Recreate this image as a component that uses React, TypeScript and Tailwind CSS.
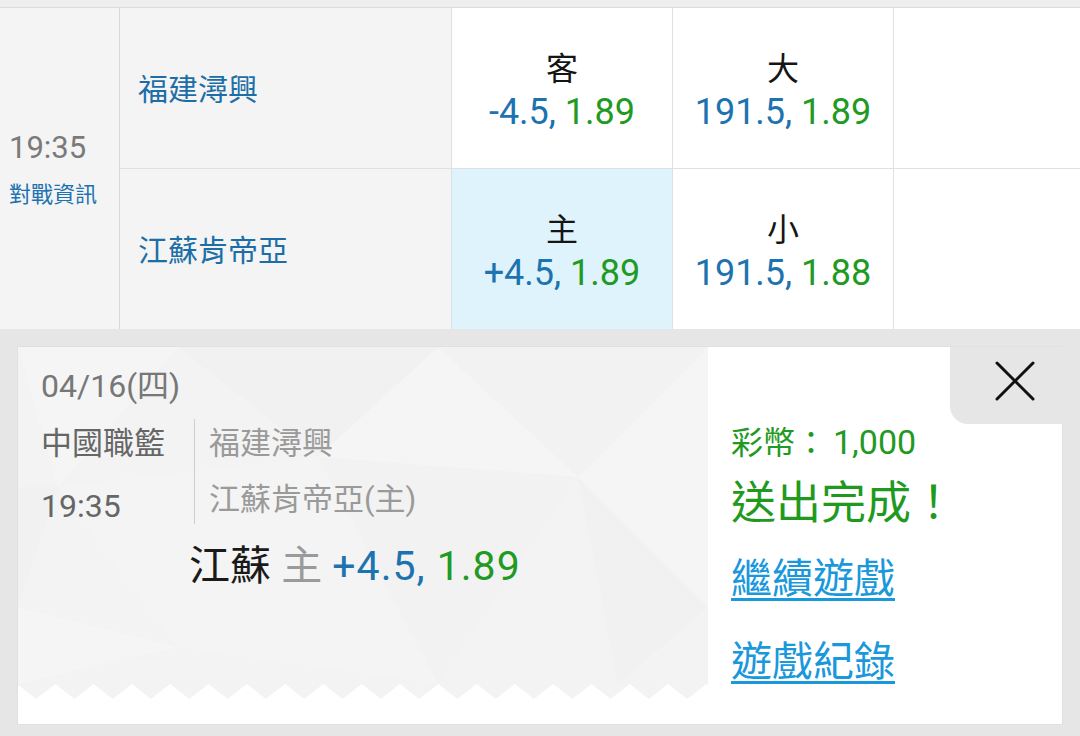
import React from "react";

const BLUE = "text-[#1d72b0]";
const GREEN = "text-[#1f9a22]";

function OddsCell({ label, a, b, highlight }: { label: string; a: string; b: string; highlight?: boolean }) {
  return (
    <div
      className={
        "flex flex-col items-center justify-center pt-[6px] border-r border-[#dde1e4] " +
        (highlight ? "bg-[#dff3fc]" : "bg-white")
      }
    >
      <div className="text-[32px] leading-[42px] text-[#151515]">{label}</div>
      <div className="text-[36px] leading-[44px] whitespace-nowrap">
        <span className={BLUE}>{a}, </span>
        <span className={GREEN}>{b}</span>
      </div>
    </div>
  );
}

function Zigzag() {
  const pts: string[] = ["0,15"];
  const period = 38.3;
  for (let k = 0; k < 20; k++) {
    const peak = -1 + period * k;
    const valley = peak + period / 2;
    pts.push(`${peak.toFixed(1)},0`);
    pts.push(`${valley.toFixed(1)},15`);
  }
  pts.push("690,15");
  return (
    <svg width="690" height="15" viewBox="0 0 690 15" className="block">
      <polygon points={pts.join(" ")} fill="#ffffff" />
    </svg>
  );
}

function Pattern() {
  return (
    <svg
      className="absolute inset-0 h-full w-full"
      viewBox="0 0 690 337"
      preserveAspectRatio="none"
    >
      <polygon points="0,0 160,0 40,140" fill="#ffffff" opacity="0.18" />
      <polygon points="160,0 420,0 300,110" fill="#e9e9e9" opacity="0.2" />
      <polygon points="300,110 420,0 560,130" fill="#ffffff" opacity="0.2" />
      <polygon points="420,0 690,0 560,130" fill="#ececec" opacity="0.18" />
      <polygon points="560,130 690,0 690,260" fill="#ffffff" opacity="0.18" />
      <polygon points="0,140 40,140 0,260" fill="#ebebeb" opacity="0.2" />
      <polygon points="40,140 300,110 160,300" fill="#ffffff" opacity="0.15" />
      <polygon points="300,110 560,130 420,337" fill="#ececec" opacity="0.18" />
      <polygon points="160,300 300,110 420,337" fill="#ffffff" opacity="0.15" />
      <polygon points="560,130 690,260 600,337" fill="#eaeaea" opacity="0.18" />
      <polygon points="0,260 160,300 0,337" fill="#ffffff" opacity="0.18" />
    </svg>
  );
}

export default function App() {
  return (
    <div className="w-[1080px] h-[736px] overflow-hidden bg-[#e6e6e6] font-['Roboto','Noto_Sans_CJK_TC',sans-serif]">
      <div className="h-[8px] bg-[#eeeeee] border-b border-[#d6dee4]" />
      <div className="grid grid-cols-[120px_332px_221px_221px_186px] grid-rows-[161px_160px]">
        <div className="row-span-2 flex flex-col justify-center bg-[#f4f4f4] border-r border-[#d9d9d9] pl-[9px]">
          <div className="text-[31px] leading-[40px] text-[#7a7a7a]">19:35</div>
          <div className="mt-[12px] text-[22px] leading-[30px] text-[#1d72b0]">對戰資訊</div>
        </div>
        <div className="flex items-center bg-[#f4f4f4] border-r border-b border-[#dde1e4] pl-[18px] pt-[3px] text-[30px] text-[#1d6ea6]">
          福建潯興
        </div>
        <div className="border-b border-[#dde1e4] grid">
          <OddsCell label="客" a="-4.5" b="1.89" />
        </div>
        <div className="border-b border-[#dde1e4] grid">
          <OddsCell label="大" a="191.5" b="1.89" />
        </div>
        <div className="bg-white border-b border-[#dde1e4]" />
        <div className="flex items-center bg-[#f4f4f4] border-r border-[#dde1e4] pl-[18px] pt-[3px] text-[30px] text-[#1d6ea6]">
          江蘇肯帝亞
        </div>
        <OddsCell label="主" a="+4.5" b="1.89" highlight />
        <OddsCell label="小" a="191.5" b="1.88" />
        <div className="bg-white" />
      </div>

      <div className="relative px-[18px] pt-[18px]">
        <div className="flex h-[377px] shadow-[0_0_1px_rgba(0,0,0,0.15)]">
          <div className="flex w-[690px] flex-col bg-white">
            <div className="relative flex-1 bg-[#f3f3f3]">
              <Pattern />
              <div className="relative pl-[23px] pt-[21px]">
                <div className="text-[32px] leading-[36px] text-[#777]">04/16(四)</div>
                <div className="mt-[9px] flex">
                  <div className="w-[153px] text-[31px] leading-[62px] text-[#666]">
                    <div>中國職籃</div>
                    <div className="text-[32px]">19:35</div>
                  </div>
                  <div className="mt-[6px] mb-[13px] w-px bg-[#cfcfcf]" />
                  <div className="pl-[14px] pt-[3px] text-[31px] leading-[56px] text-[#9a9a9a]">
                    <div>福建潯興</div>
                    <div>江蘇肯帝亞(主)</div>
                  </div>
                </div>
                <div className="mt-[4px] pl-[148px] text-[41px] leading-[50px] whitespace-nowrap">
                  <span className="text-[#1a1a1a]">江蘇</span>
                  <span className="text-[#9a9a9a]"> 主 </span>
                  <span className={BLUE + " tracking-[1px]"}>+4.5, </span>
                  <span className={GREEN + " tracking-[1px]"}>1.89</span>
                </div>
              </div>
            </div>
            <div className="bg-[#f3f3f3]">
              <Zigzag />
            </div>
            <div className="h-[25px] bg-white" />
          </div>
          <div className="flex-1 bg-white pl-[23px] pt-[75px]">
            <div className="text-[32px] leading-[40px] text-[#229922] whitespace-nowrap">
              彩幣：<span className="ml-[6px] text-[34px]">1,000</span>
            </div>
            <div className="mt-[15px] text-[45px] leading-[52px] text-[#1f9a1f] whitespace-nowrap">送出完成！</div>
            <div className="mt-[24px] text-[41px] leading-[50px]">
              <a className="text-[#1a98dc] underline decoration-[3px] underline-offset-[5px]">繼續遊戲</a>
            </div>
            <div className="mt-[33px] text-[41px] leading-[50px]">
              <a className="text-[#1a98dc] underline decoration-[3px] underline-offset-[5px]">遊戲紀錄</a>
            </div>
          </div>
        </div>
        <div className="absolute right-0 top-[18px] flex h-[77px] w-[130px] items-center justify-center rounded-bl-[18px] bg-[#e6e6e6]">
          <svg width="40" height="40" viewBox="0 0 40 40" className="-mt-[10px]">
            <path d="M2 2 L38 38 M38 2 L2 38" stroke="#111" strokeWidth="3" strokeLinecap="round" />
          </svg>
        </div>
      </div>
    </div>
  );
}
